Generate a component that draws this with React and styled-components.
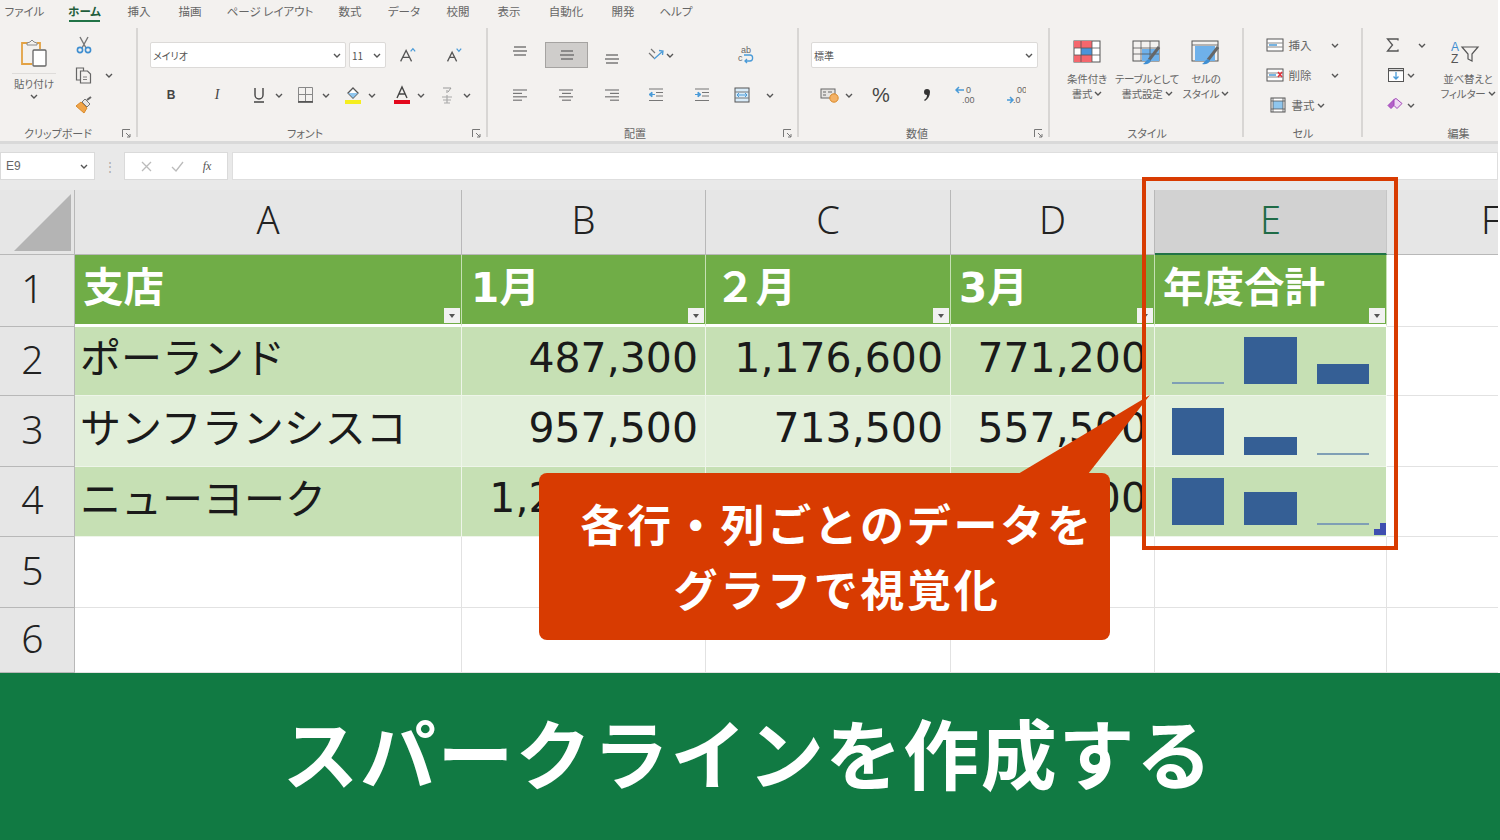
import React from "react";
import styled, { createGlobalStyle } from "styled-components";

const JP = `"Noto Sans CJK JP", "Noto Sans", sans-serif`;
const BLUE = "#4a9bd8";

const Global = createGlobalStyle`
  html, body { margin: 0; padding: 0; background: #fff; }
  * { box-sizing: border-box; }
`;

/* ---------- ribbon icons ---------- */
const Chev = () => (
  <svg width="8" height="5" viewBox="0 0 8 5"><path d="M1 1l3 3 3-3" fill="none" stroke="#555" strokeWidth="1.4" /></svg>
);
const Launcher = () => (
  <svg width="9" height="9" viewBox="0 0 9 9"><path d="M.5 8V.5H8M4 4l4 4M5 8h3V5" fill="none" stroke="#777" /></svg>
);
const Paste = () => (
  <svg width="28" height="28" viewBox="0 0 28 28">
    <path d="M8 4H2v21h10M17 4h3v6" fill="none" stroke="#e3a244" strokeWidth="1.8" />
    <path d="M7 6V4l3-1 2-2 2 2 3 1v2z" fill="#f3f1ef" stroke="#8a8a8a" />
    <rect x="13" y="11" width="13" height="16" rx="1" fill="#fff" stroke="#666" strokeWidth="1.3" />
  </svg>
);
const Cut = () => (
  <svg width="16" height="18" viewBox="0 0 16 18">
    <path d="M4 1l6 11M12 1L6 12" fill="none" stroke="#777" strokeWidth="1.4" />
    <circle cx="4" cy="14" r="2.6" fill="none" stroke="#3e8ed0" strokeWidth="1.6" />
    <circle cx="12" cy="14" r="2.6" fill="none" stroke="#3e8ed0" strokeWidth="1.6" />
  </svg>
);
const Copy = () => (
  <svg width="18" height="18" viewBox="0 0 18 18" fill="#f3f1ef" stroke="#666" strokeWidth="1.2">
    <path d="M1.5 2h7v12h-7z" />
    <path d="M5.5 5h7l3 3v9h-10z" />
    <path d="M8 11h4M8 13.5h4" strokeWidth=".8" />
  </svg>
);
const Brush = () => (
  <svg width="18" height="18" viewBox="0 0 18 18">
    <path d="M1 10l5-4 6 6-3 5z" fill="#f0a54a" stroke="#d98a2b" />
    <path d="M7 6l3-3 5 5-3 3z" fill="#e8e6e4" stroke="#777" />
    <path d="M12 4l4-3" stroke="#666" strokeWidth="2" />
  </svg>
);
const GrowA = ({ size, mark, up }) => (
  <svg width="22" height="20" viewBox="0 0 22 20">
    <path d={`M${10 - size} 17L10 ${17 - size * 2}L${10 + size} 17M${10 - size * 0.6} 12.5h${size * 1.2}`} fill="none" stroke="#555" strokeWidth="1.4" />
    <path d={up ? "M15 6l2.5-3L20 6" : "M15 3l2.5 3L20 3"} fill="none" stroke={mark} strokeWidth="1.4" />
  </svg>
);
const Underline = () => (
  <svg width="14" height="16" viewBox="0 0 14 16">
    <path d="M3 1v7a4 4 0 008 0V1M2 15h10" fill="none" stroke="#444" strokeWidth="1.4" />
  </svg>
);
const Borders = () => (
  <svg width="18" height="18" viewBox="0 0 18 18">
    <path d="M1.5 1.5h14v14h-14zM8.5 1.5v14M1.5 8.5h14" fill="none" stroke="#888" />
    <path d="M1 16h15" stroke="#444" strokeWidth="1.5" />
  </svg>
);
const FillColor = () => (
  <svg width="18" height="20" viewBox="0 0 18 20">
    <path d="M9 3l5 5-5 5-5-5z" fill="#fff" stroke="#555" strokeWidth="1.3" />
    <path d="M4 8h10l-5 5z" fill="#8fc6ee" />
    <rect x="1" y="15" width="16" height="4" fill="#f5ee1f" />
  </svg>
);
const FontColor = () => (
  <svg width="18" height="20" viewBox="0 0 18 20">
    <path d="M4 13l5-11 5 11M6 9h6" fill="none" stroke="#444" strokeWidth="1.4" />
    <rect x="1" y="15" width="16" height="4" fill="#e3081c" />
  </svg>
);
const Phonetic = () => (
  <svg width="14" height="18" viewBox="0 0 14 18">
    <path d="M3 2h8L8 6M7 4v3" fill="none" stroke="#999" />
    <path d="M2 11h10M3 14h8M4 17h6M7 9v8" fill="none" stroke="#aaa" strokeWidth="1.2" />
  </svg>
);
const Lines = ({ kind, y = 0 }) => {
  const rows = kind === "left" ? [[0, 14], [0, 9], [0, 14], [0, 9]]
    : kind === "center" ? [[0, 14], [3, 9], [0, 14], [3, 9]]
    : [[0, 14], [5, 9], [0, 14], [5, 9]];
  return (
    <svg width="14" height="14" viewBox="0 0 14 14" style={{ transform: y ? `translateY(${y}px)` : undefined }}>
      {kind === "valign"
        ? [2, 6, 10].map((ly, i) => <path key={i} d={`M${i === 1 ? 0 : 1} ${ly + 1}h${i === 1 ? 14 : 12}`} stroke="#666" strokeWidth="1.3" />)
        : rows.map(([x, w], i) => <path key={i} d={`M${x} ${2 + i * 3.4}h${w}`} stroke="#777" strokeWidth="1.2" />)}
    </svg>
  );
};
const Orient = () => (
  <svg width="18" height="16" viewBox="0 0 18 16">
    <path d="M2 6l5 5M4 2l4 4" fill="none" stroke="#777" strokeWidth="1.2" />
    <path d="M7 12l9-8M12 3.5l4 .5-.5 4" fill="none" stroke={BLUE} strokeWidth="1.3" />
  </svg>
);
const Wrap = () => (
  <svg width="18" height="20" viewBox="0 0 18 20">
    <text x="4" y="8" fontSize="9" fill="#666" fontFamily="Liberation Sans">ab</text>
    <text x="1" y="16" fontSize="9" fill="#666" fontFamily="Liberation Sans">c</text>
    <path d="M7 10h6c3.5 0 3.5 6 0 6H8M10 14l-2 2 2 2" fill="none" stroke={BLUE} strokeWidth="1.3" />
  </svg>
);
const Indent = ({ out }) => (
  <svg width="16" height="14" viewBox="0 0 16 14">
    <path d="M1 1h14M8 4.5h7M8 8h7M1 12.5h14" stroke="#777" strokeWidth="1.2" />
    <path d={out ? "M1 6.5l3-2.5v5zM4 6.5h3" : "M7 6.5l-3-2.5v5zM1 6.5h3"} fill={BLUE} stroke={BLUE} />
  </svg>
);
const Merge = () => (
  <svg width="16" height="16" viewBox="0 0 16 16">
    <rect x="1" y="1" width="14" height="14" fill="#d9ecf9" stroke="#555" />
    <path d="M1 5h14M1 11h14" stroke="#777" />
    <path d="M3 8h10M5 6l-2 2 2 2M11 6l2 2-2 2" fill="none" stroke={BLUE} />
  </svg>
);
const Currency = () => (
  <svg width="20" height="16" viewBox="0 0 20 16">
    <rect x="1" y="2" width="14" height="9" fill="#e6e4e2" stroke="#666" />
    <path d="M3 5h3M8 5h4M3 8h3" stroke="#666" />
    <circle cx="14" cy="11" r="4.2" fill="#f4b266" stroke="#d98a2b" />
  </svg>
);
const Comma = () => (
  <svg width="10" height="14" viewBox="0 0 10 14">
    <path d="M2 4a3 3 0 116 0c0 4-2 7-5 9l-1-1c2-1 3-3 3-5a3 3 0 01-3-3z" fill="#333" />
  </svg>
);
const Decimal = ({ less }) => (
  <svg width="20" height="20" viewBox="0 0 20 20" fontFamily="Liberation Sans" fontSize="9" fill="#666">
    <text x="11" y="8">{less ? "0" : "00"}</text>
    <text x="7" y="18">{less ? ".00" : ".0"}</text>
    <path d={less ? "M1 5h8M4 2L1 5l3 3" : "M1 15h6M4 12l3 3-3 3"} fill="none" stroke={BLUE} strokeWidth="1.5" />
  </svg>
);
const CondFormat = () => (
  <svg width="28" height="24" viewBox="0 0 28 24">
    <rect x="1" y="1" width="26" height="21" fill="#fff" stroke="#555" />
    <path d="M1 1h18v7H1zM1 15h18v7H1z" fill="#f4676d" />
    <rect x="8" y="8" width="11" height="7" fill="#4a94d8" />
    <path d="M8 1v21M19 1v21M1 8h26M1 15h26" stroke="#555" strokeWidth=".8" />
  </svg>
);
const TableFormat = ({ whole }) => (
  <svg width="30" height="26" viewBox="0 0 30 26">
    <rect x="1" y="1" width="26" height="20" fill="#f3f1ef" stroke="#555" />
    <path d={whole ? "M4 6h20v15H4z" : "M10 9h17v12H10z"} fill="#6fb1ea" />
    {!whole && <path d="M9 1v20M18 1v20M1 8h26M1 14h26" stroke="#555" strokeWidth=".8" />}
    {whole && <path d="M1 5h26" stroke="#555" strokeWidth=".8" />}
    <path d="M27 7L17 20" stroke="#666" strokeWidth="3" />
    <path d="M17 19c-3 1-4 4-6 5 4 1 7-1 8-3z" fill="#3f8fd3" />
  </svg>
);
const CellInsert = ({ del }) => (
  <svg width="18" height="14" viewBox="0 0 18 14">
    <rect x="1" y="1" width="16" height="12" fill="#fff" stroke="#555" />
    <path d="M1 5h16M1 9h16" stroke="#888" />
    <path d={del ? "M12 4l4 5M16 4l-4 5" : "M3 7h8"} stroke={del ? "#e3303a" : BLUE} strokeWidth="1.5" fill="none" />
    {del && <path d="M3 7h7" stroke={BLUE} strokeWidth="1.5" />}
  </svg>
);
const CellFormat = () => (
  <svg width="16" height="16" viewBox="0 0 16 16">
    <rect x="1" y="1" width="14" height="14" fill="#fff" stroke="#555" />
    <rect x="3" y="4" width="10" height="8" fill="#8fc6ee" />
    <path d="M1 4h14M1 12h14M3 1v14M13 1v14" stroke="#555" strokeWidth=".8" />
  </svg>
);
const Sigma = () => (
  <svg width="14" height="14" viewBox="0 0 14 14"><path d="M12 2.5V1H1.5l5 6-5 6H12v-1.5" fill="none" stroke="#555" strokeWidth="1.3" /></svg>
);
const FillDown = () => (
  <svg width="16" height="14" viewBox="0 0 16 14">
    <rect x=".5" y=".5" width="15" height="13" fill="#fff" stroke="#555" />
    <path d="M.5 2.5h15" stroke="#555" strokeWidth="1.5" />
    <path d="M8 4v7M5.5 8.5L8 11l2.5-2.5" fill="none" stroke={BLUE} strokeWidth="1.3" />
  </svg>
);
const Eraser = () => (
  <svg width="16" height="14" viewBox="0 0 16 14">
    <path d="M1 7.5L7 1.5l3 3-6 6z" fill="#b45fc9" stroke="#a045b8" />
    <path d="M7 1.5l2-1 6 5-5 5-3-3z" fill="#f0d8f4" stroke="#a045b8" />
  </svg>
);
const SortFilter = () => (
  <svg width="36" height="26" viewBox="0 0 36 26">
    <text x="1" y="11" fontSize="12" fill="#3e8ed0" fontFamily="Liberation Sans">A</text>
    <text x="1" y="23" fontSize="12" fill="#555" fontFamily="Liberation Sans">Z</text>
    <path d="M12 7h16l-6 7v7l-4-2v-5z" fill="none" stroke="#555" strokeWidth="1.2" />
  </svg>
);
const Corner = () => (
  <svg width="60" height="60" viewBox="0 0 60 60"><path d="M2 59h57V2z" fill="#b4b4b4" /></svg>
);

/* ---------- ribbon ---------- */
const Page = styled.div`
  position: relative;
  width: 1500px;
  height: 840px;
  overflow: hidden;
  display: flex;
  flex-direction: column;
  font-family: ${JP};
`;

const Ribbon = styled.div`
  height: 141px;
  margin-right: 2px;
  background: #f3f1ef;
  display: flex;
  flex-direction: column;
  font-feature-settings: "palt";
`;

const Tabs = styled.div`
  height: 28px;
  flex: none;
  display: flex;
  gap: 27px;
  padding: 1px 0 0 7px;
`;

const Tab = styled.div`
  width: ${(p) => p.$w}px;
  height: 21px;
  display: flex;
  justify-content: center;
  align-items: center;
  white-space: nowrap;
  font-size: 11.5px;
  color: ${(p) => (p.$active ? "#1f5d3b" : "#666")};
  font-weight: ${(p) => (p.$active ? 700 : 400)};
  border-bottom: 2px solid ${(p) => (p.$active ? "#217346" : "transparent")};
`;

const Groups = styled.div`
  display: flex;
  height: 109px;
`;

const Group = styled.div`
  width: ${(p) => p.$w}px;
  flex: none;
  display: flex;
  flex-direction: column;
  border-right: 2px solid ${(p) => (p.$last ? "transparent" : "#d8d6d4")};
`;

const GroupBody = styled.div`
  flex: 1;
  min-height: 0;
  display: flex;
  flex-direction: ${(p) => (p.$column ? "column" : "row")};
  padding-top: ${(p) => (p.$column ? 14 : 0)}px;
`;

const LabelRow = styled.div`
  height: 12px;
  margin-bottom: -2px;
  display: flex;
  align-items: center;
`;

const LabelText = styled.div`
  width: 80px;
  margin-left: ${(p) => p.$cx - 40}px;
  text-align: center;
  font-size: 11px;
  color: #666;
  white-space: nowrap;
`;

const LauncherSlot = styled.div`
  margin-left: auto;
  margin-right: 5px;
  display: flex;
`;

const GroupLabel = ({ cx, text, launcher }) => (
  <LabelRow>
    <LabelText $cx={cx}>{text}</LabelText>
    {launcher && <LauncherSlot><Launcher /></LauncherSlot>}
  </LabelRow>
);

const IconRow = styled.div`
  height: ${(p) => p.$h || 26}px;
  margin-top: ${(p) => p.$mt || 0}px;
  display: flex;
  align-items: center;
`;

const Btn = styled.div`
  width: ${(p) => p.$w || 20}px;
  margin-left: ${(p) => p.$ml || 0}px;
  flex: none;
  height: 100%;
  display: flex;
  align-items: center;
  justify-content: center;
  color: #444;
  font-size: ${(p) => p.$fs || 13}px;
  font-family: ${(p) => (p.$serif ? `"Liberation Serif", serif` : `"Liberation Sans", sans-serif`)};
  font-weight: ${(p) => (p.$bold ? 700 : 400)};
  font-style: ${(p) => (p.$italic ? "italic" : "normal")};
`;

const ChevBtn = ({ ml }) => <Btn $w={8} $ml={ml}><Chev /></Btn>;

const SelectedBtn = styled(Btn)`
  background: #cfcdcb;
  border: 1px solid #a5a3a1;
`;

const Combo = styled.div`
  width: ${(p) => p.$w}px;
  margin-left: ${(p) => p.$ml || 0}px;
  height: 26px;
  flex: none;
  background: #fff;
  border: 1px solid #dcdad8;
  border-radius: 2px;
  display: flex;
  align-items: center;
  justify-content: space-between;
  padding: 0 4px 0 2px;
  font-size: 10px;
  color: #555;
`;

const PasteCol = styled.div`
  width: 68px;
  flex: none;
  display: flex;
  flex-direction: column;
  align-items: center;
  padding-top: 11px;
  font-size: 10.5px;
  color: #666;
  line-height: 14px;
`;

const PasteRule = styled.div`
  width: 44px;
  height: 1px;
  background: #dedcda;
  margin: 6px 0 3px;
`;

const PasteChev = styled.div`
  margin-top: 3px;
  display: flex;
`;

const SmallCol = styled.div`
  margin-left: ${(p) => p.$ml || 0}px;
  padding-top: 2px;
  flex: none;
  width: ${(p) => (p.$w ? `${p.$w}px` : "auto")};
`;

const SmallRow = styled.div`
  height: 30px;
  display: flex;
  align-items: center;
`;

const SmallLabel = styled.div`
  width: 24px;
  margin-left: 3px;
  flex: none;
  text-align: center;
  white-space: nowrap;
  font-size: 11.5px;
  color: #666;
`;

const BigCol = styled.div`
  width: 58px;
  margin-left: ${(p) => p.$ml || 0}px;
  padding-top: 12px;
  flex: none;
  display: flex;
  flex-direction: column;
  align-items: center;
  font-size: 10.5px;
  line-height: 15px;
  letter-spacing: -0.2px;
  color: #666;
  text-align: center;
  white-space: nowrap;
`;

const BigIcon = styled.div`
  height: 26px;
  margin-bottom: 5px;
`;

const BigText = styled.div`
  display: flex;
  align-items: center;
  gap: 2px;
`;

/* ---------- formula bar ---------- */
const FormulaBar = styled.div`
  height: 49px;
  margin-right: 2px;
  background: #e9e9e9;
  border-top: 3px solid #d9d9d9;
  display: flex;
  align-items: flex-start;
  padding-top: 8px;
`;

const NameBox = styled.div`
  width: 95px;
  height: 28px;
  background: #fff;
  border: 1px solid #dadada;
  display: flex;
  align-items: center;
  justify-content: space-between;
  padding: 0 6px 0 5px;
  font: 12px "Liberation Sans", sans-serif;
  color: #666;
`;

const Dots = styled.div`
  width: 29px;
  text-align: center;
  color: #aaa;
  font-size: 12px;
  line-height: 28px;
`;

const FxBox = styled.div`
  width: 104px;
  height: 28px;
  background: #fff;
  border: 1px solid #dadada;
  display: flex;
  align-items: center;
  justify-content: space-around;
  padding: 0 6px;
  font: italic 12px "Liberation Serif", serif;
  color: #555;
`;

const FormulaInput = styled.div`
  flex: 1;
  margin-left: 4px;
  height: 28px;
  background: #fff;
  border: 1px solid #dedede;
`;

/* ---------- sheet ---------- */
const Sheet = styled.div`
  flex: none;
  height: 483px;
  margin-right: 2px;
  overflow: hidden;
  display: grid;
  grid-template-columns: 75px 387px 244px 245px 204px 232px 208px;
  grid-template-rows: 65px 72px 69px 71px 70px 71px 65px;
  background: #fff;
`;

const CornerCell = styled.div`
  background: #e6e6e6;
  border-right: 1px solid #b8b8b8;
  border-bottom: 1px solid #b8b8b8;
  display: flex;
  align-items: flex-end;
  justify-content: flex-end;
  padding: 0 2px 2px 0;
`;

const ColHead = styled.div`
  background: ${(p) => (p.$selected ? "#d2d2d2" : "#e6e6e6")};
  color: ${(p) => (p.$selected ? "#1f6b47" : "#222")};
  border-right: 1px solid ${(p) => (p.$selected ? "#c6c6c6" : "#b8b8b8")};
  border-bottom: ${(p) => (p.$selected ? "2px solid #217346" : "1px solid #b8b8b8")};
  display: flex;
  align-items: center;
  justify-content: center;
  padding-bottom: 6px;
  font: 300 38px "Noto Sans", sans-serif;
`;

const RowHead = styled.div`
  background: #e6e6e6;
  border-right: 1px solid #b8b8b8;
  border-bottom: 1px solid #b8b8b8;
  display: flex;
  align-items: center;
  justify-content: center;
  padding: 0 9px 6px 0;
  color: #222;
  font: 300 39px "Noto Sans", sans-serif;
`;

const TitleCell = styled.div`
  position: relative;
  background: #70ad47;
  border-right: 1px solid #c6e0b4;
  border-bottom: 3px solid #fff;
  padding-left: ${(p) => p.$pad}px;
  padding-bottom: 10px;
  display: flex;
  align-items: center;
  color: #fff;
  font: 700 40.5px "DejaVu Sans", ${JP};
`;

const FilterBtn = styled.div`
  position: absolute;
  right: 1px;
  bottom: 1px;
  width: 16px;
  height: 15px;
  background: #f1f1f1;
  display: flex;
  align-items: center;
  justify-content: center;

  &::after {
    content: "";
    border: 3.5px solid transparent;
    border-top: 4px solid #555;
    border-bottom: 0;
  }
`;

const DataCell = styled.div`
  background: ${(p) => (p.$band ? "#c6e0b4" : "#e2efda")};
  border-right: 1px solid #eef5e9;
  border-bottom: 1px solid #eef5e9;
  display: flex;
  align-items: center;
  justify-content: ${(p) => (p.$num ? "flex-end" : "flex-start")};
  padding: ${(p) => (p.$num ? "0 7px 7px 0" : "0 0 12px 5px")};
  color: #1a1a1a;
  white-space: nowrap;
  font: 41px "DejaVu Sans", ${JP};
`;

const SparkCell = styled.div`
  background: ${(p) => (p.$band ? "#c6e0b4" : "#e2efda")};
  border-right: 1px solid #fff;
  border-bottom: 1px solid #eef5e9;
  position: relative;
  display: flex;
  align-items: flex-end;
  gap: 20px;
  padding: 0 17px 11px 17px;
`;

const Bar = styled.div`
  flex: 1;
  height: ${(p) => p.$h}px;
  background: ${(p) => (p.$h < 3 ? "#7f9fb5" : "#355f95")};
`;

const FillHandle = styled.div`
  position: absolute;
  right: 0;
  bottom: 1px;
  width: 12px;
  height: 12px;
  background: #3f4fb0;
  clip-path: polygon(100% 0, 100% 100%, 0 100%, 0 50%, 50% 50%, 50% 0);
`;

const Empty = styled.div`
  background: #fff;
  border-right: 1px solid #e2e2e2;
  border-bottom: 1px solid #e2e2e2;
`;

/* ---------- overlays + banner ---------- */
const Highlight = styled.div`
  position: absolute;
  left: 1142px;
  top: 177px;
  width: 256px;
  height: 373px;
  border: 4.5px solid #d83b01;
  pointer-events: none;
`;

const Callout = styled.div`
  position: absolute;
  left: 539px;
  top: 473px;
  width: 571px;
  height: 167px;
  border-radius: 8px;
  background: #d83b01;
  color: #fff;
  display: flex;
  flex-direction: column;
  align-items: center;
  justify-content: center;
  padding: 0 0 2px 25px;
  font-size: 44px;
  font-weight: 700;
  line-height: 65px;
  letter-spacing: 2.7px;
`;

const CalloutTail = styled.svg`
  position: absolute;
  left: 470px;
  top: -78px;
`;

const Banner = styled.div`
  flex: 1;
  background: #117a43;
  color: #fff;
  display: flex;
  align-items: center;
  justify-content: center;
  padding: 0 4px 12px 0;
  font-size: 76px;
  font-weight: 700;
  letter-spacing: 1.6px;
`;

const tabs = [
  ["ファイル", 35], ["ホーム", 31, true], ["挿入", 24], ["描画", 24], ["ページ レイアウト", 82], ["数式", 24],
  ["データ", 30], ["校閲", 24], ["表示", 24], ["自動化", 36], ["開発", 24], ["ヘルプ", 28],
];

const columns = ["A", "B", "C", "D", "E", "F"];

const rows = [
  { name: "ポーランド", values: ["487,300", "1,176,600", "771,200"], bars: [2, 47, 20], band: true },
  { name: "サンフランシスコ", values: ["957,500", "713,500", "557,500"], bars: [47, 18, 2], band: false },
  { name: "ニューヨーク", values: ["1,250,900", "980,700", "866,400"], bars: [47, 33, 2], band: true, handle: true },
];

const titles = [["支店", 8], ["1月", 9], ["２月", 9], ["3月", 8], ["年度合計", 8]];

const App = () => (
  <Page>
    <Global />
    <Ribbon>
      <Tabs>
        {tabs.map(([label, w, active]) => (
          <Tab key={label} $w={w} $active={active}>{label}</Tab>
        ))}
      </Tabs>
      <Groups>
        <Group $w={138}>
          <GroupBody>
            <PasteCol>
              <Paste />
              <PasteRule />
              貼り付け
              <PasteChev><Chev /></PasteChev>
            </PasteCol>
            <SmallCol $ml={6}>
              <SmallRow><Btn><Cut /></Btn></SmallRow>
              <SmallRow><Btn><Copy /></Btn><ChevBtn ml={11} /></SmallRow>
              <SmallRow><Btn><Brush /></Btn></SmallRow>
            </SmallCol>
          </GroupBody>
          <GroupLabel cx={58} text="クリップボード" launcher />
        </Group>

        <Group $w={350}>
          <GroupBody $column>
            <IconRow>
              <Combo $ml={12} $w={196}>メイリオ<Chev /></Combo>
              <Combo $ml={3} $w={37}>11<Chev /></Combo>
              <Btn $ml={11}><GrowA size={6} mark="#4a9bd8" up /></Btn>
              <Btn $ml={26}><GrowA size={5} mark="#4a9bd8" /></Btn>
            </IconRow>
            <IconRow $h={24} $mt={15}>
              <Btn $ml={23} $bold $fs={12}>B</Btn>
              <Btn $ml={26} $italic $serif $fs={14}>I</Btn>
              <Btn $ml={22}><Underline /></Btn>
              <ChevBtn ml={6} />
              <Btn $ml={13}><Borders /></Btn>
              <ChevBtn ml={6} />
              <Btn $ml={13}><FillColor /></Btn>
              <ChevBtn ml={5} />
              <Btn $ml={16}><FontColor /></Btn>
              <ChevBtn ml={5} />
              <Btn $ml={12}><Phonetic /></Btn>
              <ChevBtn ml={6} />
            </IconRow>
          </GroupBody>
          <GroupLabel cx={167} text="フォント" launcher />
        </Group>

        <Group $w={311}>
          <GroupBody $column>
            <IconRow>
              <Btn $ml={22}><Lines kind="valign" y={-4} /></Btn>
              <SelectedBtn $w={43} $ml={15}><Lines kind="valign" /></SelectedBtn>
              <Btn $ml={14}><Lines kind="valign" y={4} /></Btn>
              <Btn $ml={24}><Orient /></Btn>
              <ChevBtn />
              <Btn $ml={62}><Wrap /></Btn>
            </IconRow>
            <IconRow $h={24} $mt={15}>
              <Btn $ml={22}><Lines kind="left" /></Btn>
              <Btn $ml={26}><Lines kind="center" /></Btn>
              <Btn $ml={26}><Lines kind="right" /></Btn>
              <Btn $ml={24}><Indent out /></Btn>
              <Btn $ml={26}><Indent /></Btn>
              <Btn $ml={20}><Merge /></Btn>
              <ChevBtn ml={14} />
            </IconRow>
          </GroupBody>
          <GroupLabel cx={147} text="配置" launcher />
        </Group>

        <Group $w={251}>
          <GroupBody $column>
            <IconRow>
              <Combo $ml={12} $w={227}>標準<Chev /></Combo>
            </IconRow>
            <IconRow $h={24} $mt={15}>
              <Btn $ml={21}><Currency /></Btn>
              <ChevBtn ml={5} />
              <Btn $ml={18} $fs={20}>%</Btn>
              <Btn $ml={26}><Comma /></Btn>
              <Btn $ml={18}><Decimal less /></Btn>
              <Btn $ml={31}><Decimal /></Btn>
            </IconRow>
          </GroupBody>
          <GroupLabel cx={118} text="数値" launcher />
        </Group>

        <Group $w={194}>
          <GroupBody>
            <BigCol $ml={8}>
              <BigIcon><CondFormat /></BigIcon>
              条件付き
              <BigText>書式 <Chev /></BigText>
            </BigCol>
            <BigCol $ml={2}>
              <BigIcon><TableFormat /></BigIcon>
              テーブルとして
              <BigText>書式設定 <Chev /></BigText>
            </BigCol>
            <BigCol $ml={1}>
              <BigIcon><TableFormat whole /></BigIcon>
              セルの
              <BigText>スタイル <Chev /></BigText>
            </BigCol>
          </GroupBody>
          <GroupLabel cx={97} text="スタイル" />
        </Group>

        <Group $w={119}>
          <GroupBody>
            <SmallCol>
              <SmallRow><Btn $ml={21}><CellInsert /></Btn><SmallLabel>挿入</SmallLabel><ChevBtn ml={19} /></SmallRow>
              <SmallRow><Btn $ml={21}><CellInsert del /></Btn><SmallLabel>削除</SmallLabel><ChevBtn ml={19} /></SmallRow>
              <SmallRow><Btn $ml={24}><CellFormat /></Btn><SmallLabel>書式</SmallLabel><ChevBtn ml={2} /></SmallRow>
            </SmallCol>
          </GroupBody>
          <GroupLabel cx={59} text="セル" />
        </Group>

        <Group $w={135} $last>
          <GroupBody>
            <SmallCol $w={76}>
              <SmallRow><Btn $ml={20}><Sigma /></Btn><ChevBtn ml={15} /></SmallRow>
              <SmallRow><Btn $ml={23}><FillDown /></Btn><ChevBtn ml={1} /></SmallRow>
              <SmallRow><Btn $ml={22}><Eraser /></Btn><ChevBtn ml={2} /></SmallRow>
            </SmallCol>
            <BigCol>
              <BigIcon><SortFilter /></BigIcon>
              並べ替えと
              <BigText>フィルター <Chev /></BigText>
            </BigCol>
          </GroupBody>
          <GroupLabel cx={98} text="編集" />
        </Group>
      </Groups>
    </Ribbon>

    <FormulaBar>
      <NameBox>E9<Chev /></NameBox>
      <Dots>⋮</Dots>
      <FxBox>
        <svg width="11" height="11" viewBox="0 0 11 11"><path d="M1 1l9 9M10 1l-9 9" stroke="#bbb" strokeWidth="1.3" /></svg>
        <svg width="13" height="11" viewBox="0 0 13 11"><path d="M1 6l4 4 7-9" fill="none" stroke="#bbb" strokeWidth="1.3" /></svg>
        <span>fx</span>
      </FxBox>
      <FormulaInput />
    </FormulaBar>

    <Sheet>
      <CornerCell><Corner /></CornerCell>
      {columns.map((c) => (
        <ColHead key={c} $selected={c === "E"}>{c}</ColHead>
      ))}

      <RowHead>1</RowHead>
      {titles.map(([label, pad]) => (
        <TitleCell key={label} $pad={pad}>{label}<FilterBtn /></TitleCell>
      ))}
      <Empty />

      {rows.map((row, i) => (
        <React.Fragment key={row.name}>
          <RowHead>{i + 2}</RowHead>
          <DataCell $band={row.band}>{row.name}</DataCell>
          {row.values.map((v) => (
            <DataCell key={v} $band={row.band} $num>{v}</DataCell>
          ))}
          <SparkCell $band={row.band}>
            {row.bars.map((h, j) => <Bar key={j} $h={h} />)}
            {row.handle && <FillHandle />}
          </SparkCell>
          <Empty />
        </React.Fragment>
      ))}

      {[5, 6].map((n) => (
        <React.Fragment key={n}>
          <RowHead>{n}</RowHead>
          {columns.map((c) => <Empty key={c} />)}
        </React.Fragment>
      ))}
    </Sheet>

    <Banner>スパークラインを作成する</Banner>

    <Highlight />
    <Callout>
      <CalloutTail width="150" height="80" viewBox="0 0 150 80">
        <path d="M9 79L141 0 79 79z" fill="#d83b01" />
      </CalloutTail>
      <div>各行・列ごとのデータを</div>
      <div>グラフで視覚化</div>
    </Callout>
  </Page>
);

export default App;
